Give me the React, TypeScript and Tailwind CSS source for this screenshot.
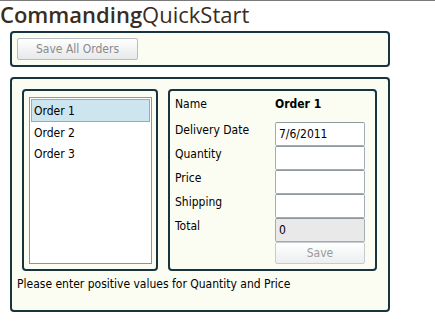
import React from "react";

const tb =
  "h-[24px] w-[90px] border border-[#a3acb5] border-t-[#8e969e] rounded-[2px] bg-white px-[3px] flex items-center text-black";

export default function App() {
  const font = { fontFamily: "'DejaVu Sans Condensed', 'DejaVu Sans', sans-serif" };
  return (
    <div className="w-[435px] h-[324px] bg-white border-t border-[#7a7a7a] text-[12px] text-black" style={font}>
      <div
        className="h-[30px] leading-[30px] text-[22px] text-[#3a2c20] whitespace-nowrap -mt-[2px] mb-[2px]"
        style={{ fontFamily: "'Open Sans', 'Noto Sans', sans-serif" }}
      >
        <span className="font-semibold">Commanding</span>
        <span>QuickStart</span>
      </div>
      <div className="ml-[10px] w-[380px] h-[36px] border-2 border-[#18343f] rounded-[4px] bg-[#fbfdf2] pl-[5px] pt-[5px]">
        <div className="w-[121px] h-[22px] border border-[#b4bcc4] rounded-[2px] bg-gradient-to-b from-white to-[#e6e8ea] text-[#8a8a8a] flex items-center justify-center">
          Save All Orders
        </div>
      </div>
      <div className="mt-[10px] ml-[10px] w-[380px] h-[235px] border-2 border-[#18343f] rounded-[4px] bg-[#fbfdf2] pl-[10px] pt-[10px]">
        <div className="flex gap-[10px]">
          <div className="w-[136px] h-[182px] border-2 border-[#18343f] rounded-[4px] pl-[5px] pt-[6px]">
            <div className="w-[123px] h-[167px] border border-[#8796a4] bg-white p-[1px]">
              <div className="h-[23px] bg-[#cce5ef] border border-[#6dbcd6] pl-[2px] flex items-center">Order 1</div>
              <div className="h-[21px] pl-[3px] flex items-center">Order 2</div>
              <div className="h-[21px] pl-[3px] flex items-center">Order 3</div>
            </div>
          </div>
          <div className="w-[209px] h-[182px] border-2 border-[#18343f] rounded-[4px] pl-[5px] pt-[3px]">
            <div className="flex h-[20px] items-center">
              <div className="w-[100px]">Name</div>
              <div className="font-bold">Order 1</div>
            </div>
            <div className="mt-[8px] flex flex-col">
              {[
                ["Delivery Date", "7/6/2011"],
                ["Quantity", ""],
                ["Price", ""],
                ["Shipping", ""],
              ].map(([l, v]) => (
                <div key={l} className="flex h-[24px]">
                  <div className="w-[100px] pt-[1px] leading-[14px]">{l}</div>
                  <div className={tb}>{v}</div>
                </div>
              ))}
              <div className="flex h-[24px]">
                <div className="w-[100px] pt-[1px] leading-[14px]">Total</div>
                <div className="h-[24px] w-[90px] border border-[#a3acb5] border-t-[#8e969e] rounded-[2px] bg-[#e9e9e9] px-[3px] flex items-center">0</div>
              </div>
              <div className="flex h-[22px]">
                <div className="w-[100px]" />
                <div className="w-[90px] h-[22px] border border-[#c5cbd1] rounded-[2px] bg-gradient-to-b from-white to-[#eceeef] text-[#9a9a9a] flex items-center justify-center">
                  Save
                </div>
              </div>
            </div>
          </div>
        </div>
        <div className="mt-[6px] -ml-[5px] leading-[14px]">Please enter positive values for Quantity and Price</div>
      </div>
    </div>
  );
}
